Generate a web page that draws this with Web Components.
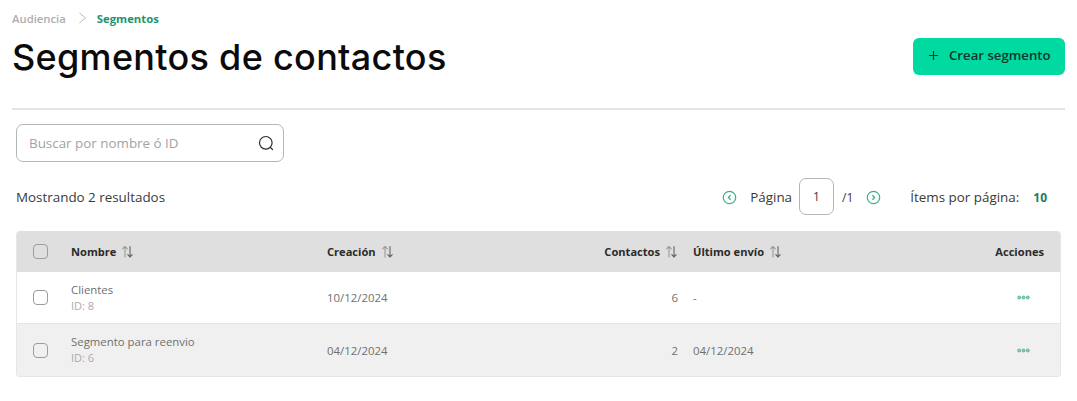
<!DOCTYPE html>
<html lang="es">
<head>
<meta charset="utf-8">
<title>Segmentos</title>
<style>
  body { margin: 0; background: #fff; font-family: "Open Sans", sans-serif; color: #333; }
</style>
</head>
<body>
<seg-page>
  <seg-header title="Segmentos de contactos"></seg-header>
  <seg-search placeholder="Buscar por nombre ó ID"></seg-search>
  <seg-toolbar></seg-toolbar>
  <seg-table>
    <seg-row name="Clientes" uid="ID: 8" created="10/12/2024" contacts="6" sent="-"></seg-row>
    <seg-row name="Segmento para reenvio" uid="ID: 6" created="04/12/2024" contacts="2" sent="04/12/2024" alt></seg-row>
  </seg-table>
</seg-page>

<script>
const GRID = "grid-template-columns: 54px 256px 351px 15px 1fr 17px 60px;";
const SORT = `<svg class="sort" width="13" height="13" viewBox="0 0 13 13" fill="none" stroke-width="1.1" stroke-linecap="round" stroke-linejoin="round">
  <path d="M4 12V1.5M1.6 3.8 4 1.5l2.4 2.3" stroke="#9a9a9a"/>
  <path d="M9 1.5V12M6.8 9.7 9 12l2.2-2.3" stroke="#666"/></svg>`;

class segPage extends HTMLElement {
  constructor() {
    super();
    this.attachShadow({mode: "open"}).innerHTML = `
      <style>
        :host { display: block; padding: 0 12px; height: 401px; box-sizing: border-box; overflow: hidden; }
      </style>
      <slot></slot>`;
  }
}

class segHeader extends HTMLElement {
  constructor() {
    super();
    this.attachShadow({mode: "open"}).innerHTML = `
      <style>
        :host { display: block; border-bottom: 2px solid #e4e4e4; height: 110px; box-sizing: border-box; padding-top: 11px; }
        .crumbs { display: flex; align-items: center; height: 14px; font-size: 11.3px; font-weight: 600; color: #aeaeae; }
        .crumbs svg { margin: 0 10px 0 12px; }
        .crumbs b { font-weight: 700; color: #22936f; }
        .main { display: flex; justify-content: space-between; align-items: flex-start; }
        h1 { margin: 7px 0 0; font: 500 36px/50px Inter, sans-serif; color: #0b0b0b; letter-spacing: 0.3px; }
        button { margin-top: 13px; width: 152px; height: 37px; border: 0; border-radius: 6px; background: #00d9a0; color: #14342c;
                 font: 600 13.2px "Open Sans", sans-serif; display: flex; align-items: center; gap: 11px; padding: 0 0 3px 16px; box-sizing: border-box; }
      </style>
      <div class="crumbs">
        <span>Audiencia</span>
        <svg width="9" height="12" viewBox="0 0 9 12" fill="none" stroke="#bdbdbd"><path d="M1.5 1 7.5 6l-6 5"/></svg>
        <b>Segmentos</b>
      </div>
      <div class="main">
        <h1>${this.getAttribute("title")}</h1>
        <button>
          <svg width="9" height="9" viewBox="0 0 9 9" stroke="#14342c" stroke-width="1.2"><path d="M4.5 0v9M0 4.5h9"/></svg>
          Crear segmento
        </button>
      </div>`;
  }
}

class segSearch extends HTMLElement {
  constructor() {
    super();
    this.attachShadow({mode: "open"}).innerHTML = `
      <style>
        :host { display: flex; align-items: center; justify-content: space-between; width: 268px; height: 38px; box-sizing: border-box;
                margin: 14px 0 0 4px; padding: 0 9px 0 12px; border: 1.5px solid #b5b5b5; border-radius: 7px; }
        span { font-size: 13.4px; color: #a3a3a3; }
      </style>
      <span>${this.getAttribute("placeholder")}</span>
      <svg width="16" height="16" viewBox="0 0 16 16" fill="none" stroke="#2b2b2b" stroke-width="1.2" stroke-linecap="round">
        <circle cx="7.8" cy="7.8" r="6.3"/><path d="m12.3 12.3 2.2 2.2"/>
      </svg>`;
  }
}

class segToolbar extends HTMLElement {
  constructor() {
    super();
    const circle = d => `<svg width="15" height="15" viewBox="0 0 15 15" fill="none" stroke="#3fae8d" stroke-width="1.2">
      <circle cx="7.5" cy="7.5" r="6.2"/><path d="${d}" stroke-width="1.3"/></svg>`;
    this.attachShadow({mode: "open"}).innerHTML = `
      <style>
        :host { display: flex; align-items: center; height: 38px; margin: 16px 0 0 4px; padding-right: 18px; font-size: 13.4px; color: #3a3a3a; }
        .count { flex: 1; }
        svg { display: block; }
        .box { align-self: flex-start; width: 35px; height: 37px; box-sizing: border-box; border: 1.5px solid #b5b5b5; border-radius: 7px;
               display: flex; align-items: center; justify-content: center; margin: 0 8px 0 7px; font-size: 12px; }
        .label { margin-left: 13px; }
        .total { margin-right: 13px; font-size: 12px; }
        .items { margin-left: 29px; }
        b { margin: 0 0 0 14px; font-size: 12px; font-weight: 700; color: #1d7c62; }
      </style>
      <span class="count">Mostrando 2 resultados</span>
      ${circle("M8.6 5.3 6.4 7.5l2.2 2.2")}
      <span class="label">Página</span>
      <span class="box">1</span>
      <span class="total">/1</span>
      ${circle("M6.4 5.3l2.2 2.2-2.2 2.2")}
      <span class="items">Ítems por página:</span>
      <b>10</b>`;
  }
}

class segCheck extends HTMLElement {
  constructor() {
    super();
    this.attachShadow({mode: "open"}).innerHTML = `
      <style>
        :host { display: block; width: 15px; height: 15px; box-sizing: border-box; border: 1.5px solid #9c9c9c; border-radius: 4px; margin-left: 16px; }
      </style>`;
  }
}

class segTable extends HTMLElement {
  constructor() {
    super();
    this.attachShadow({mode: "open"}).innerHTML = `
      <style>
        :host { display: block; margin: 15px 0 0 4px; width: 1045px; border: 1px solid #e6e6e6; border-top: 0; border-radius: 4px; overflow: hidden; box-sizing: border-box; }
        .head { display: grid; ${GRID} align-items: center; height: 41px; background: #dfdfdf; font-size: 11.1px; font-weight: 700; color: #2b2b2b; }
        .head div { display: flex; align-items: center; gap: 5px; grid-row: 1; }
        seg-check { grid-column: 1; grid-row: 1; }
        .name { grid-column: 2; }
        .created { grid-column: 3; }
        .contacts { grid-column: 3; justify-content: flex-end; }
        .sent { grid-column: 5; }
        .act { grid-column: 6 / 8; justify-content: flex-end; margin-right: 16px; }
      </style>
      <div class="head">
        <seg-check></seg-check>
        <div class="name">Nombre ${SORT}</div>
        <div class="created">Creación ${SORT}</div>
        <div class="contacts">Contactos ${SORT}</div>
        <div class="sent">Último envío ${SORT}</div>
        <div class="act">Acciones</div>
      </div>
      <slot></slot>`;
  }
}

class segRow extends HTMLElement {
  constructor() {
    super();
    const a = n => this.getAttribute(n);
    this.attachShadow({mode: "open"}).innerHTML = `
      <style>
        :host { display: grid; ${GRID} align-items: center; height: 51px; background: #fff; font-size: 11.4px; color: #6f6f6f; }
        :host([alt]) { background: #f0f0f0; border-top: 1px solid #e6e6e6; height: 52px; }
        .name { line-height: 16px; }
        .name small { display: block; font-size: 11px; color: #ababab; }
        .mid { display: flex; justify-content: space-between; }
        .sent { grid-column: 5; }
        .dots { grid-column: 6 / 8; justify-self: end; margin-right: 30px; }
        svg { display: block; }
      </style>
      <seg-check></seg-check>
      <div class="name">${a("name")}<small>${a("uid")}</small></div>
      <div class="mid"><span>${a("created")}</span><span>${a("contacts")}</span></div>
      <div class="sent">${a("sent")}</div>
      <svg class="dots" width="13" height="5" viewBox="0 0 13 5" fill="#8fd0bc" stroke="#3fa585" stroke-width="0.7">
        <circle cx="2.2" cy="2.5" r="1.5"/><circle cx="6.5" cy="2.5" r="1.5"/><circle cx="10.8" cy="2.5" r="1.5"/>
      </svg>`;
  }
}

customElements.define("seg-page", segPage);
customElements.define("seg-header", segHeader);
customElements.define("seg-search", segSearch);
customElements.define("seg-toolbar", segToolbar);
customElements.define("seg-check", segCheck);
customElements.define("seg-table", segTable);
customElements.define("seg-row", segRow);
</script>
</body>
</html>
